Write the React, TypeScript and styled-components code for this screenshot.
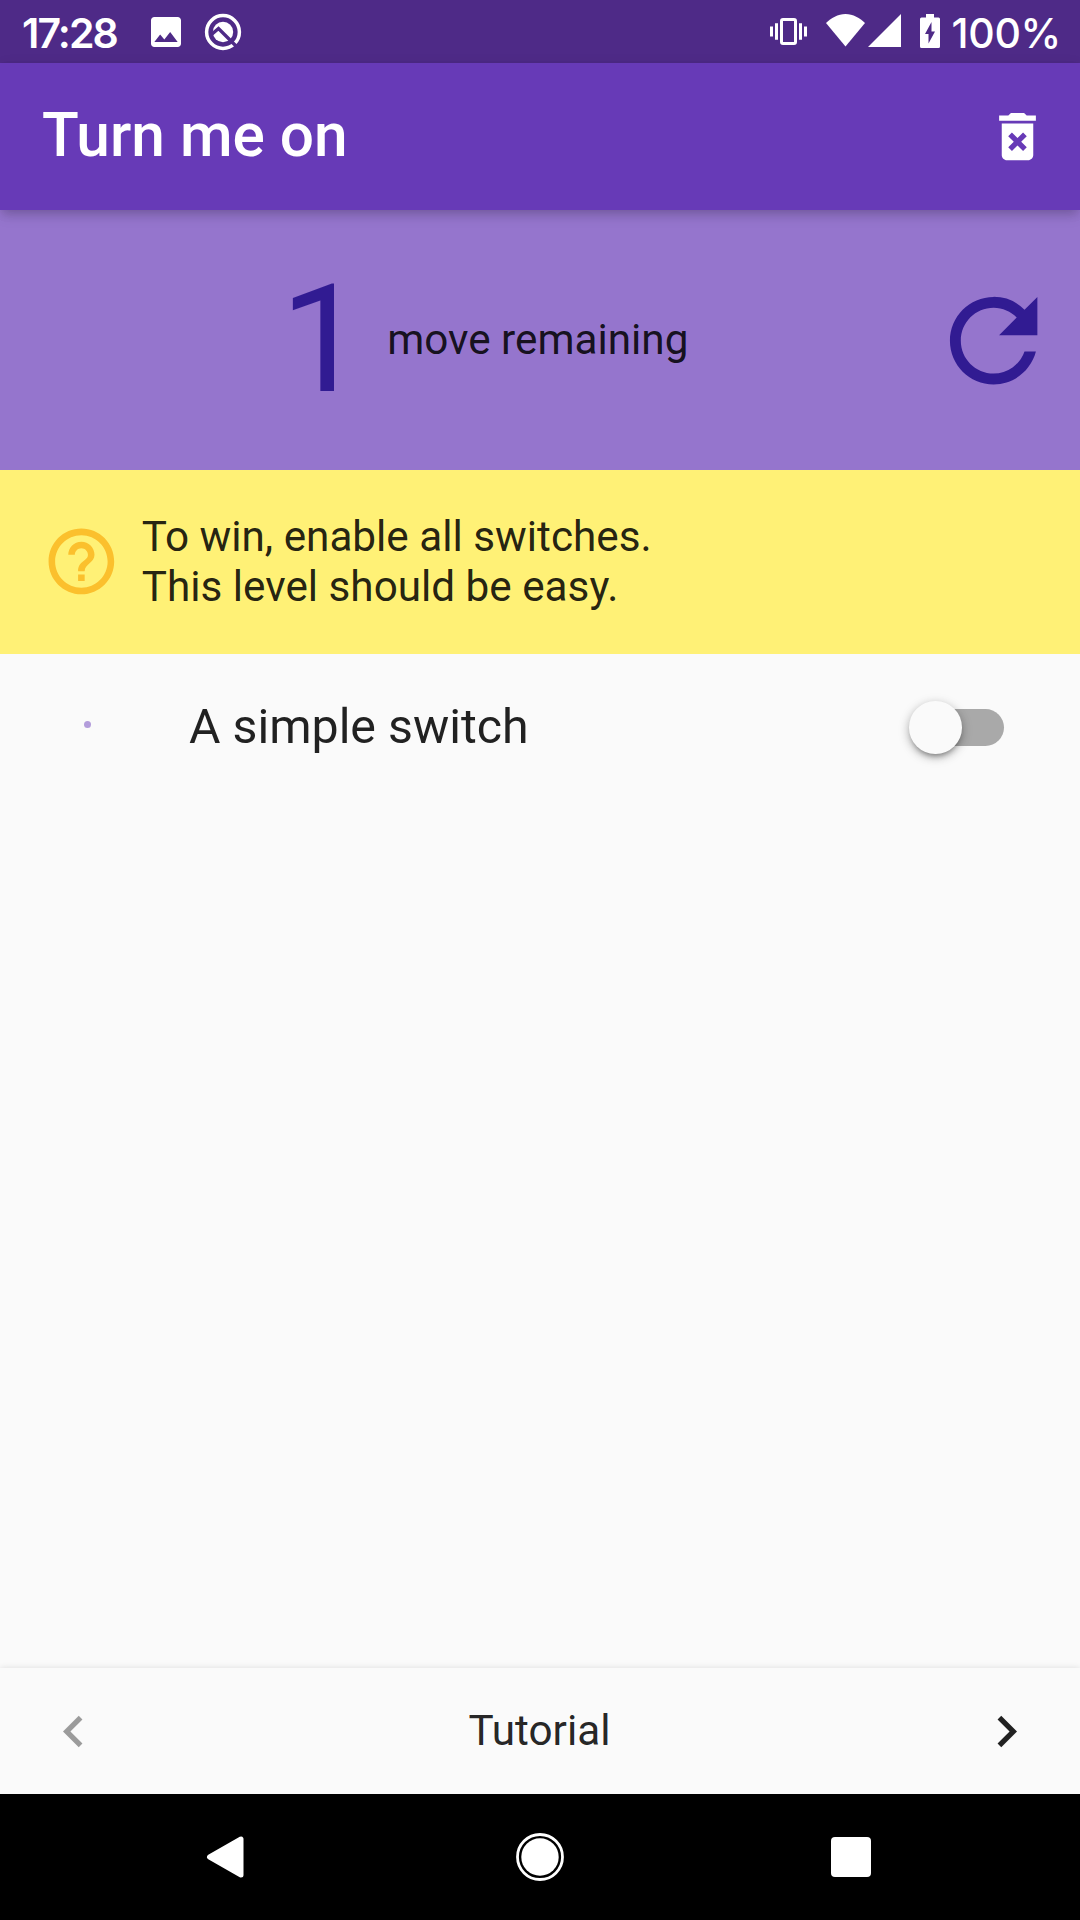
import React from "react";
import styled, { createGlobalStyle } from "styled-components";
import {
  MdChevronLeft,
  MdChevronRight,
  MdDeleteForever,
  MdHelpOutline,
  MdImage,
  MdRefresh,
} from "react-icons/md";

const GlobalStyle = createGlobalStyle`
  * { box-sizing: border-box; }
  body { margin: 0; background: #fafafa; }
`;

const Screen = styled.div`
  display: flex;
  flex-direction: column;
  width: 1080px;
  height: 1920px;
  overflow: hidden;
  background: #fafafa;
  color: rgba(0, 0, 0, 0.87);
  font-family: Roboto, "Liberation Sans", sans-serif;
  font-size: 42.26px;
  line-height: 49.5px;
`;

const StatusBar = styled.header`
  display: flex;
  justify-content: space-between;
  height: 63px;
  padding: 0 19px 0 22px;
  background: #4e2a87;
  color: #fff;
`;

const StatusGroup = styled.div`
  display: flex;
  align-items: center;
  svg { display: block; flex: none; }
`;

const StatusText = styled.span<{ $weight: number; $spacing: number; $gap?: number }>`
  font-family: Inter, Roboto, sans-serif;
  font-size: 41px;
  line-height: 50px;
  font-weight: ${(p) => p.$weight};
  letter-spacing: ${(p) => p.$spacing}px;
  margin-right: ${(p) => p.$gap ?? 0}px;
  padding-top: 2px;
`;

const AppBar = styled.div`
  z-index: 1;
  display: flex;
  align-items: center;
  justify-content: space-between;
  height: 147px;
  flex: none;
  padding: 0 31.5px 0 42px;
  background: #673ab7;
  color: #fff;
  box-shadow: 0 5px 10px -3px rgba(0, 0, 0, 0.18), 0 8px 13px rgba(0, 0, 0, 0.06), 0 2px 14px rgba(0, 0, 0, 0.06);
`;

const Title = styled.h1`
  margin: 0;
  padding-bottom: 2px;
  font-size: 60.4px;
  line-height: 71px;
  font-weight: 500;
`;

const IconButton = styled.button<{ $size?: number; $color?: string }>`
  display: flex;
  padding: 0;
  border: 0;
  background: none;
  color: ${(p) => p.$color ?? "inherit"};
  font-size: ${(p) => p.$size ?? 63}px;
`;

const MovesPanel = styled.section`
  display: flex;
  align-items: center;
  height: 259.5px;
  flex: none;
  padding: 1px 21px 0 41px;
  background: #9575cd;
`;

const Moves = styled.div`
  display: flex;
  flex: 1;
  align-items: center;
  justify-content: center;
  gap: 22px;
  padding-bottom: 2px;
`;

const MoveCount = styled.span`
  color: #311b92;
  font-size: 151px;
  line-height: 177px;
`;

const Hint = styled.section`
  display: flex;
  align-items: center;
  gap: 21px;
  height: 184px;
  flex: none;
  padding: 0 42px;
  background: #fff176;
  svg { color: #fbc02d; font-size: 78.75px; flex: none; }
`;

const Level = styled.main`
  flex: 1;
`;

const SwitchRow = styled.div`
  display: flex;
  align-items: center;
  height: 147px;
  padding: 0 76px 0 84px;
`;

const Dot = styled.span`
  width: 7px;
  height: 7px;
  margin: 0 98px 5px 0;
  border-radius: 50%;
  background: #b39ddb;
`;

const SwitchLabel = styled.span`
  flex: 1;
  padding-bottom: 2px;
  font-size: 48.3px;
  line-height: 57px;
`;

const Track = styled.button`
  display: flex;
  align-items: center;
  width: 87px;
  height: 37px;
  margin-top: 1px;
  padding: 0;
  border: 0;
  border-radius: 19px;
  background: #a9a9a9;
`;

const Thumb = styled.span`
  flex: none;
  width: 52.5px;
  height: 52.5px;
  margin-left: -7.7px;
  border-radius: 50%;
  background: #fafafa;
  box-shadow: 0 5px 5px -3px rgba(0, 0, 0, 0.3), 0 3px 8px rgba(0, 0, 0, 0.22), 0 3px 13px rgba(0, 0, 0, 0.12);
`;

const Pager = styled.footer`
  display: flex;
  align-items: center;
  justify-content: space-between;
  height: 126px;
  flex: none;
  padding: 0 42px;
  background: #fafafa;
  box-shadow: 0 0 6px rgba(0, 0, 0, 0.12);
`;

const PagerLabel = styled.span`
  padding: 0 1px 1px 0;
`;

const NavBar = styled.nav`
  display: flex;
  align-items: center;
  justify-content: space-between;
  height: 126px;
  flex: none;
  padding: 0 209px 0 206px;
  background: #000;
  svg { display: block; }
`;

const HomeIcon = styled.svg`
  margin-left: 5px;
`;

const StatusIcon = styled.svg<{ $left?: number; $right?: number; $lift?: number }>`
  margin: 0 ${(p) => p.$right ?? 0}px ${(p) => p.$lift ?? 0}px ${(p) => p.$left ?? 0}px;
`;

const QIcon = () => (
  <StatusIcon $left={18} width="38" height="38" viewBox="0 0 38 38">
    <circle cx="19" cy="19" r="16.4" fill="none" stroke="#fff" strokeWidth="3.5" />
    <circle cx="19" cy="19" r="10.2" fill="#fff" />
    <path d="M7.500 21.500L14.500 15.500L33 34" fill="none" stroke="#4e2a87" strokeWidth="3.400" />
  </StatusIcon>
);

const VibrateIcon = () => (
  <StatusIcon $lift={1} width="37" height="27" viewBox="0 0 37 27" fill="#fff">
    <rect x="11.5" y="1.5" width="14" height="24" rx="1.5" fill="none" stroke="#fff" strokeWidth="3" />
    <path d="M0 8.500h3v10H0zM5 5.200h3v16.500H5zM29 5.200h3v16.500h-3zM34 8.500h3v10h-3z" />
  </StatusIcon>
);

const WifiIcon = () => (
  <StatusIcon $left={19} $lift={2} width="39" height="33" viewBox="0 0 39 33">
    <path d="M19.500 32.500L0 9C5 4 12 0 19.500 0S34 4 39 9z" fill="#fff" />
  </StatusIcon>
);

const SignalIcon = () => (
  <StatusIcon $left={3} $lift={2} width="33" height="33" viewBox="0 0 33 33">
    <path d="M0 33H33V0z" fill="#fff" />
  </StatusIcon>
);

const BatteryIcon = () => (
  <StatusIcon $left={19} $right={12} $lift={1} width="20" height="34" viewBox="0 0 20 34">
    <path d="M6 0h8v3.500h4.500Q20 3.500 20 5v27.500Q20 34 18.500 34h-17Q0 34 0 32.500V5Q0 3.500 1.500 3.500H6z" fill="#fff" />
    <path d="M11.500 8v9.500H15L8.500 29.500V20H5z" fill="#4e2a87" />
  </StatusIcon>
);

export default function App() {
  return (
    <>
      <GlobalStyle />
      <Screen>
        <StatusBar>
          <StatusGroup>
            <StatusText $weight={600} $spacing={-1.9} $gap={29.5}>17:28</StatusText>
            <MdImage size={40} />
            <QIcon />
          </StatusGroup>
          <StatusGroup>
            <VibrateIcon />
            <WifiIcon />
            <SignalIcon />
            <BatteryIcon />
            <StatusText $weight={500} $spacing={-0.3}>100%</StatusText>
          </StatusGroup>
        </StatusBar>
        <AppBar>
          <Title>Turn me on</Title>
          <IconButton aria-label="Delete"><MdDeleteForever /></IconButton>
        </AppBar>
        <MovesPanel>
          <Moves>
            <MoveCount>1</MoveCount>
            <span>move remaining</span>
          </Moves>
          <IconButton aria-label="Restart" $size={131.25} $color="#311b92"><MdRefresh /></IconButton>
        </MovesPanel>
        <Hint>
          <MdHelpOutline />
          <div>To win, enable all switches.<br />This level should be easy.</div>
        </Hint>
        <Level>
          <SwitchRow>
            <Dot />
            <SwitchLabel>A simple switch</SwitchLabel>
            <Track role="switch" aria-checked={false}><Thumb /></Track>
          </SwitchRow>
        </Level>
        <Pager>
          <IconButton aria-label="Previous" $color="#9b9b9b"><MdChevronLeft /></IconButton>
          <PagerLabel>Tutorial</PagerLabel>
          <IconButton aria-label="Next" $color="#212121"><MdChevronRight /></IconButton>
        </Pager>
        <NavBar>
          <svg width="38" height="42" viewBox="0 0 38 42">
            <path d="M3.500 21L35 3V39z" fill="#fff" stroke="#fff" strokeWidth="5" strokeLinejoin="round" />
          </svg>
          <HomeIcon width="48" height="48" viewBox="0 0 48 48">
            <circle cx="24" cy="24" r="22.500" fill="none" stroke="#fff" strokeWidth="2.800" />
            <circle cx="24" cy="24" r="18.700" fill="#fff" />
          </HomeIcon>
          <svg width="40" height="40" viewBox="0 0 40 40">
            <rect width="40" height="40" rx="4" fill="#fff" />
          </svg>
        </NavBar>
      </Screen>
    </>
  );
}
